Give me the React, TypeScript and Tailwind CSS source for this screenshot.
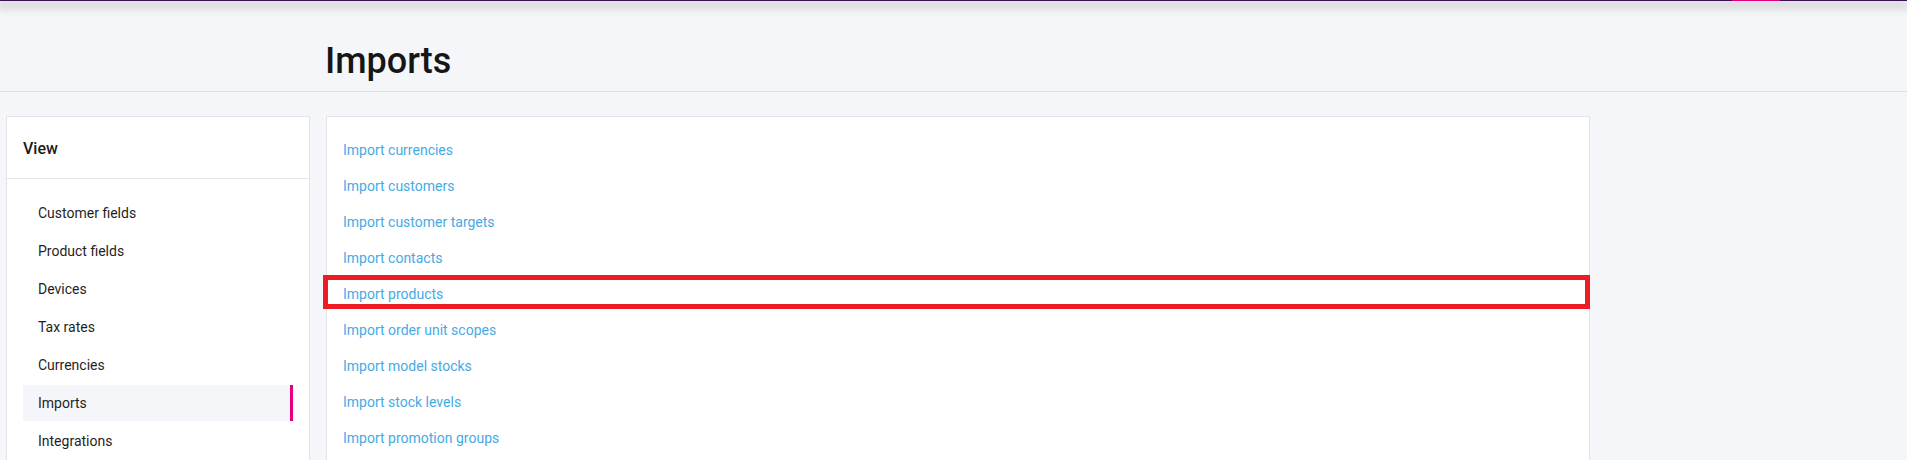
import React from "react";

const leftItems = [
  "Customer fields",
  "Product fields",
  "Devices",
  "Tax rates",
  "Currencies",
  "Imports",
  "Integrations",
];

const rightItems = [
  "Import currencies",
  "Import customers",
  "Import customer targets",
  "Import contacts",
  "Import products",
  "Import order unit scopes",
  "Import model stocks",
  "Import stock levels",
  "Import promotion groups",
];

export default function App() {
  return (
    <div
      className="min-h-[460px] h-[460px] overflow-hidden bg-[#f5f6fa] text-[#1c1c1c]"
      style={{ fontFamily: "Roboto, 'Noto Sans', Arial, sans-serif" }}
    >
      <div className="relative z-10 flex h-px w-full bg-[#3b1150] shadow-[0_4px_10px_3px_rgba(0,0,0,0.16)]">
        <div className="ml-[1732px] h-px w-[48px] bg-[#e6007e]" />
      </div>
      <div className="h-[91px] border-b border-[#e0e1e6] pl-[325px] pt-[39px]">
        <h1 className="text-[36px] font-medium leading-[42px] text-[#161616]">Imports</h1>
      </div>
      <div className="mt-6 flex gap-4 pl-[6px]">
        <div className="h-[600px] w-[304px] shrink-0 border border-[#e3e3e8] bg-white">
          <div className="h-[62px] border-b border-[#e3e3e8] pl-4 pt-[22px]">
            <div className="text-[16px] font-medium leading-[19px] text-[#1a1a1a]">View</div>
          </div>
          <div className="flex flex-col gap-[2px] px-4 pt-4">
            {leftItems.map((it) => {
              const active = it === "Imports";
              return (
                <div
                  key={it}
                  className={
                    active
                      ? "h-9 border-r-[3px] border-[#e6007e] bg-[#f5f6fa] pl-[15px] text-[14px] leading-9 text-[#1f1f1f]"
                      : "h-9 pl-[15px] text-[14px] leading-9 text-[#1f1f1f]"
                  }
                >
                  {it}
                </div>
              );
            })}
          </div>
        </div>
        <div className="h-[600px] w-[1264px] shrink-0 border border-[#e3e3e8] bg-white pt-[15px]">
          {rightItems.map((it) => (
            <div key={it} className="relative h-9 pl-4 text-[14px] leading-9 text-[#46aae4]">
              {it}
              {it === "Import products" && (
                <div className="pointer-events-none absolute left-[-4px] right-[-1px] top-[-1px] h-[34px] border-[5px] border-[#ed1c24]" />
              )}
            </div>
          ))}
        </div>
      </div>
    </div>
  );
}
